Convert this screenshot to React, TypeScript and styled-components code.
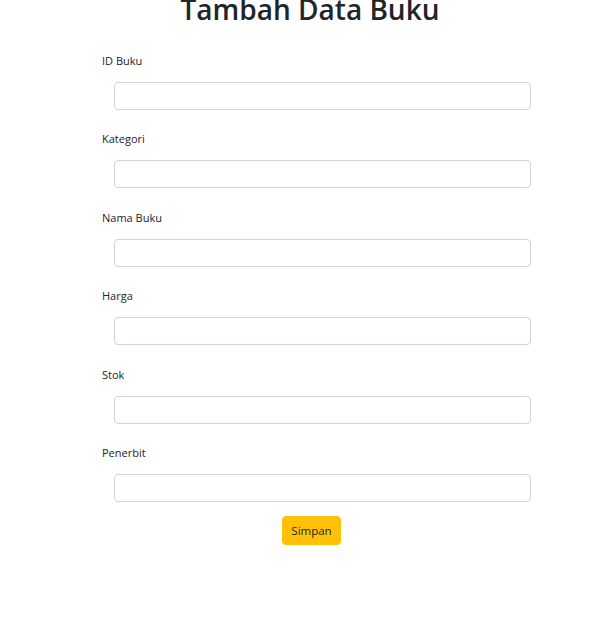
import React from "react";
import styled, { createGlobalStyle } from "styled-components";

const GlobalStyle = createGlobalStyle`
  body {
    margin: 0;
    background: #ffffff;
    font-family: "Open Sans", "Noto Sans", sans-serif;
    color: #212529;
  }
`;

const Page = styled.div`
  width: 603px;
  display: flex;
  flex-direction: column;
  align-items: center;
`;

const Title = styled.h1`
  margin: -9px 0 0 0;
  padding-left: 17px;
  font-size: 28px;
  line-height: 36px;
  font-weight: 600;
  color: #212529;
`;

const Form = styled.form`
  align-self: flex-start;
  width: 428px;
  margin: 25px 0 0 102px;
  display: flex;
  flex-direction: column;
`;

const Field = styled.div`
  display: flex;
  flex-direction: column;
  margin-bottom: 20.4px;
`;

const Label = styled.label`
  font-size: 11px;
  line-height: 18px;
  margin-bottom: 12px;
  color: #212529;
`;

const Input = styled.input`
  box-sizing: border-box;
  margin-left: 12px;
  width: 417px;
  height: 28px;
  border: 1px solid #ced4da;
  border-radius: 4px;
  background: #fff;
  padding: 4px 10px;
  font-size: 12px;
  font-family: inherit;
`;

const Actions = styled.div`
  display: flex;
  justify-content: center;
  margin-top: -6px;
  padding-right: 9px;
`;

const Button = styled.button`
  box-sizing: border-box;
  width: 59px;
  height: 29px;
  background: #ffc107;
  border: 1px solid #ffc107;
  border-radius: 4px;
  font-family: inherit;
  font-size: 11.5px;
  color: #212529;
  padding: 0;
  cursor: pointer;
`;

const fields = ["ID Buku", "Kategori", "Nama Buku", "Harga", "Stok", "Penerbit"];

export default function App() {
  return (
    <>
      <GlobalStyle />
      <Page>
        <Title>Tambah Data Buku</Title>
        <Form onSubmit={(e) => e.preventDefault()}>
          {fields.map((f) => (
            <Field key={f}>
              <Label>{f}</Label>
              <Input type="text" />
            </Field>
          ))}
          <Actions>
            <Button type="submit">Simpan</Button>
          </Actions>
        </Form>
      </Page>
    </>
  );
}
